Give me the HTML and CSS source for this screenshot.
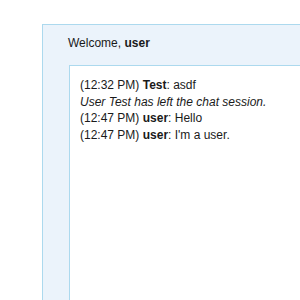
FILE: index.html
```html
<!DOCTYPE html>
<html>
<head>
<meta charset="utf-8">
<link rel="stylesheet" href="styles.css">
</head>
<body>
<div class="chat-panel">
  <div class="welcome">Welcome, <b>user</b></div>
  <div class="chat-log">
    <div class="msg">(12:32 PM) <b>Test</b>: asdf</div>
    <div class="msg notice">User Test has left the chat session.</div>
    <div class="msg">(12:47 PM) <b>user</b>: Hello</div>
    <div class="msg">(12:47 PM) <b>user</b>: I'm a user.</div>
  </div>
</div>
</body>
</html>
```
FILE: styles.css
```css
html, body {
  margin: 0;
  padding: 0;
  height: 100%;
  overflow: hidden;
  background: #fff;
}
body {
  font-family: "Liberation Sans", Arial, sans-serif;
  font-size: 12px;
  color: #1a1a1a;
  padding: 24px 0 0 42px;
  box-sizing: border-box;
}
.chat-panel {
  box-sizing: border-box;
  height: 100%;
  display: flex;
  flex-direction: column;
  background: #ebf3fb;
  border-top: 1px solid #acd9ee;
  border-left: 1px solid #acd9ee;
  padding: 11px 0 0 25px;
}
.welcome {
  height: 14px;
  line-height: 14px;
}
.chat-log {
  flex: 1;
  margin: 15px 0 0 1px;
  background: #fff;
  border-top: 1px solid #acd9ee;
  border-left: 1px solid #acd9ee;
  padding: 11px 0 0 10px;
  line-height: 16.7px;
}
.notice {
  font-style: italic;
}
```
